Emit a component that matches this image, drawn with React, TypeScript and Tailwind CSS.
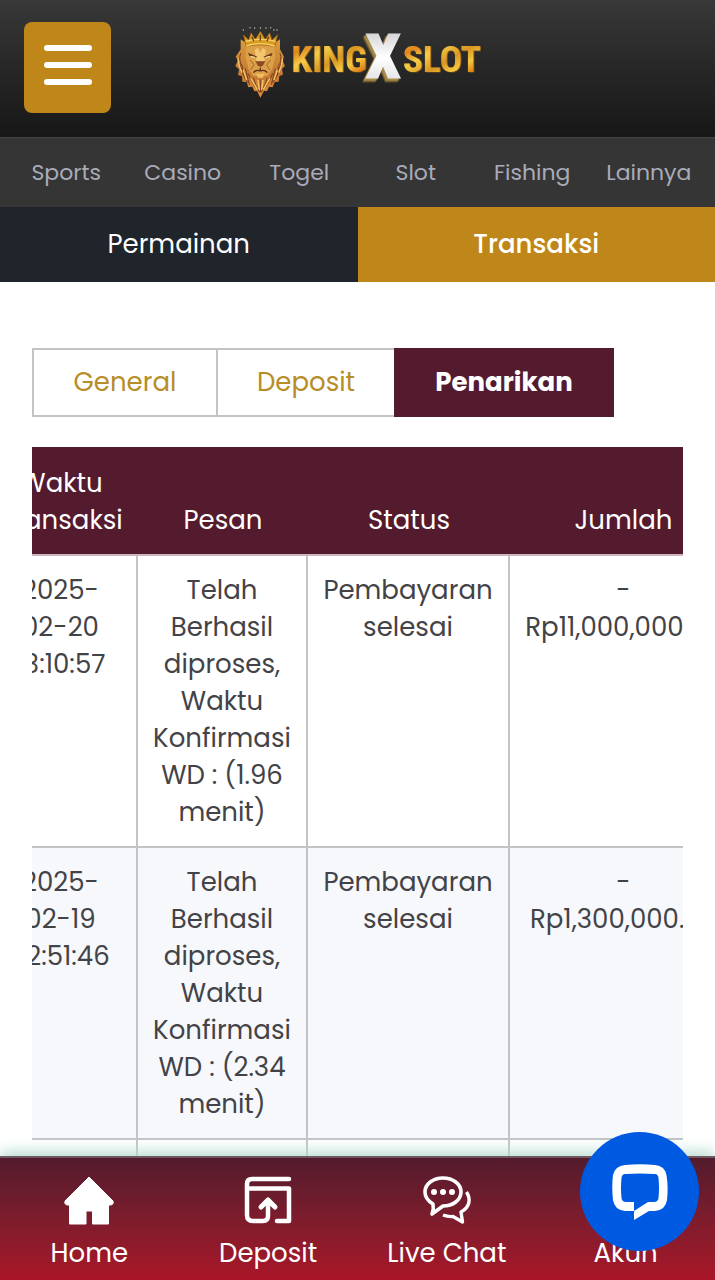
import { useLayoutEffect, useRef } from "react";

const categories = ["Sports", "Casino", "Togel", "Slot", "Fishing", "Lainnya"];

const withdrawals = [
  {
    time: "2025-\n02-20\n13:10:57",
    message: "Telah Berhasil diproses, Waktu Konfirmasi WD : (1.96 menit)",
    status: "Pembayaran selesai",
    amount: "-\nRp11,000,000.00",
  },
  {
    time: "2025-\n02-19\n22:51:46",
    message: "Telah Berhasil diproses, Waktu Konfirmasi WD : (2.34 menit)",
    status: "Pembayaran selesai",
    amount: "-\nRp1,300,000.00",
  },
  { time: "", message: "", status: "", amount: "" },
];

function Logo() {
  return (
    <svg viewBox="30 36 765 234" className="h-[78px] w-[255px]" role="img" aria-label="King X Slot">
      <defs>
        <linearGradient id="gold" x1="0" y1="0" x2="1" y2="1">
          <stop offset="0" stopColor="#f0bd38" />
          <stop offset="0.2" stopColor="#e0861c" />
          <stop offset="0.35" stopColor="#f4cd48" />
          <stop offset="0.55" stopColor="#d99722" />
          <stop offset="0.7" stopColor="#f4c840" />
          <stop offset="0.85" stopColor="#dd7a14" />
          <stop offset="1" stopColor="#f0c038" />
        </linearGradient>
        <linearGradient id="mane" x1="0" y1="0" x2="0" y2="1">
          <stop offset="0" stopColor="#d99a3a" />
          <stop offset="0.6" stopColor="#c47a33" />
          <stop offset="1" stopColor="#e0903c" />
        </linearGradient>
        <linearGradient id="silver" x1="0" y1="0" x2="0" y2="1">
          <stop offset="0" stopColor="#c4c4c6" />
          <stop offset="0.5" stopColor="#ffffff" />
          <stop offset="1" stopColor="#d6d6da" />
        </linearGradient>
      </defs>
      <g>
        <path d="M62 88 L78 98 L164 98 L180 88 L180 118 L192 140 L187 150 L195 168 L186 176 L189 194 L178 198 L176 215 L164 216 L158 232 L147 230 L141 244 L132 242 L121 263 L111 243 L103 244 L97 230 L85 232 L80 216 L67 215 L66 199 L54 195 L57 178 L46 168 L54 151 L47 140 L62 118 Z" fill="url(#mane)" />
        <g stroke="#7a3d1c" strokeWidth="3" fill="none">
          <path d="M62 130 Q54 150 68 170 Q62 190 84 218 M58 158 Q66 180 74 200 M180 130 Q188 150 174 170 Q180 190 158 218 M184 158 Q176 180 168 200" />
          <path d="M84 190 Q92 212 106 232 M158 190 Q150 212 136 232 M100 203 Q106 225 119 248 M142 203 Q136 225 123 248 M121 208 V246" />
          <path d="M76 175 L88 224 M166 175 L154 224" />
        </g>
        <g stroke="#f5c568" strokeWidth="4" fill="none">
          <path d="M54 145 Q56 168 66 188 M188 145 Q186 168 176 188 M92 205 L112 238 M150 205 L130 238 M114 210 L118 240 M129 210 L125 240" />
          <path d="M70 180 L80 210 M172 180 L162 210" />
        </g>
        <path d="M80 108 H162 L166 140 L156 178 L142 198 H100 L86 178 L76 140 Z" fill="#dca048" />
        <path d="M104 120 L114 113 L121 128 L128 113 L138 120 L133 154 H109 Z" fill="#f3c76f" />
        <path d="M84 128 L112 140 L106 144 L88 138 Z M158 128 L130 140 L136 144 L154 138 Z" fill="#6b3619" />
        <path d="M92 139 L106 143 M150 139 L136 143" stroke="#f8dd9a" strokeWidth="4" />
        <path d="M106 154 L136 154 L129 166 L121 171 L113 166 Z" fill="#8a4a26" />
        <path d="M121 173 V181 M100 188 Q108 178 121 183 Q134 178 142 188" stroke="#5e2f17" strokeWidth="4" fill="none" />
        <path d="M90 150 L102 164 L92 180 M152 150 L140 164 L150 180" stroke="#a8622f" strokeWidth="3" fill="none" />
        <path d="M108 191 H134 L128 203 H114 Z" fill="#f1bd63" />
        <path d="M70 74 L86 90 L93 68 L106 88 L121 64 L136 88 L149 68 L156 90 L173 74 L164 110 Q121 98 79 110 Z" fill="#d99a22" stroke="#8d5510" strokeWidth="2" />
        <path d="M79 108 Q121 94 164 108 M76 94 Q121 82 167 94" stroke="#f7d26b" strokeWidth="4" fill="none" />
        <path d="M96 80 L101 94 M121 74 V92 M146 80 L141 94" stroke="#694011" strokeWidth="4" />
        <g fill="#d8d2c2">
          <circle cx="70" cy="60" r="2" />
          <circle cx="90" cy="53" r="2" />
          <circle cx="104" cy="54" r="2" />
          <circle cx="121" cy="54" r="2" />
          <circle cx="138" cy="54" r="2" />
          <circle cx="152" cy="53" r="2" />
          <circle cx="162" cy="60" r="2" />
          <circle cx="171" cy="60" r="2" />
        </g>
      </g>
      <g fontFamily="'Roboto Condensed', 'Liberation Sans Narrow', sans-serif" fontWeight="700">
        <g fontSize="112" fill="url(#gold)" className="[filter:drop-shadow(3px_1px_0_#a86a18)]">
          <text x="214" y="187">KING</text>
          <text x="548" y="187">SLOT</text>
        </g>
        <text x="440" y="202" fontSize="176" fill="url(#silver)" stroke="url(#silver)" strokeWidth="9" className="[filter:drop-shadow(-6px_7px_0_#a58a4a)_drop-shadow(-3px_4px_0_#75602e)]">X</text>
      </g>
    </svg>
  );
}

function HomeIcon() {
  return (
    <svg viewBox="0 0 50 50" className="size-[50px]" aria-hidden="true">
      <path d="M25 2 L49 26 Q50 30 46 30 H44.500 V49 H28.500 V36 H22 V49 H5.500 V30 H4 Q0 30 1 26 Z" fill="#fff" stroke="#fff" strokeWidth="1" strokeLinejoin="round" />
    </svg>
  );
}

function DepositIcon() {
  return (
    <svg viewBox="0 0 50 50" className="size-[50px]" aria-hidden="true" fill="none" stroke="#fff" strokeWidth="4.500" strokeLinecap="round" strokeLinejoin="round">
      <path d="M46 4 H9 Q4 4 4 9 V40 Q4 46 10 46 H20 Q25 46 25 41 V26" />
      <path d="M4 13.500 H46 V46 H34" />
      <path d="M18 32 L25 25 L32 32" strokeWidth="5" />
    </svg>
  );
}

function ChatIcon() {
  return (
    <svg viewBox="0 0 50 50" className="size-[50px]" aria-hidden="true" fill="none" stroke="#fff" strokeWidth="3.600" strokeLinejoin="round">
      <path d="M21 3 C31 3 39 9 39 17 C39 25 31 31 21 31 L10 39 Q12 34 11 29 C6 26 3 22 3 17 C3 9 11 3 21 3 Z" />
      <path d="M44.500 17 C49 24 48 32 39 37 L40.500 47 L31 41.500 Q26 42 21 40" strokeWidth="3.400" />
      <g fill="#fff" stroke="none">
        <circle cx="12" cy="17" r="3" />
        <circle cx="21" cy="17" r="3" />
        <circle cx="30" cy="17" r="3" />
      </g>
    </svg>
  );
}

function AccountIcon() {
  return (
    <svg viewBox="0 0 50 50" className="size-[50px]" aria-hidden="true" fill="#fff">
      <circle cx="25" cy="15" r="11" />
      <path d="M5 47 Q5 29 25 29 Q45 29 45 47 Z" />
    </svg>
  );
}

const shortcuts = [
  { label: "Home", Icon: HomeIcon },
  { label: "Deposit", Icon: DepositIcon },
  { label: "Live Chat", Icon: ChatIcon },
  { label: "Akun", Icon: AccountIcon },
];

export default function App() {
  const tableScroll = useRef<HTMLDivElement>(null);

  useLayoutEffect(() => {
    if (tableScroll.current) tableScroll.current.scrollLeft = 47;
  }, []);

  return (
    <div className="relative flex h-screen flex-col overflow-hidden bg-white font-['Poppins','Inter',sans-serif] text-[#434347]">
      <header className="grid h-[137px] shrink-0 grid-cols-[1fr_auto_1fr] items-start bg-linear-to-b from-[#383838] to-[#171717] px-6 pt-[22px]">
        <button type="button" aria-label="Menu" className="flex h-[91px] w-[87px] flex-col items-center justify-center gap-[11px] rounded-lg bg-[#bf871a] pb-[5px]">
          <span className="h-[6px] w-12 rounded-full bg-white" />
          <span className="h-[6px] w-12 rounded-full bg-white" />
          <span className="h-[6px] w-12 rounded-full bg-white" />
        </button>
        <Logo />
      </header>

      <nav className="grid h-[70px] shrink-0 grid-cols-6 items-center border-t border-[#444] bg-[#353535] px-2 text-center text-[22px] text-[#a9abb9]">
        {categories.map((c) => (
          <a key={c} href="#">{c}</a>
        ))}
      </nav>

      <div className="grid h-[75px] shrink-0 grid-cols-2 text-[26px] text-white">
        <button type="button" className="bg-[#20242b]">Permainan</button>
        <button type="button" className="bg-[#bf871a] font-medium">Transaksi</button>
      </div>

      <main className="min-h-0 flex-1 overflow-hidden px-8 pt-[66px]">
        <div className="flex h-[69px] text-[26px] text-[#b78d27]">
          <button type="button" className="w-[184px] border-2 border-r-0 border-[#c3c3c5]">General</button>
          <button type="button" className="w-[178px] border-2 border-r-0 border-[#c3c3c5]">Deposit</button>
          <button type="button" className="w-[220px] bg-[#531b2d] font-bold text-white">Penarikan</button>
        </div>

        <div ref={tableScroll} className="mt-[30px] overflow-x-auto [scrollbar-width:none]">
          <table className="w-full min-w-[752px] table-fixed border-separate border-spacing-0 text-center text-[26px] leading-[37px]">
            <colgroup>
              <col className="w-[153px]" />
              <col className="w-[170px]" />
              <col className="w-[202px]" />
              <col />
            </colgroup>
            <thead className="bg-[#531b2d] text-white">
              <tr className="h-[109px] align-bottom">
                <th className="border-b-2 border-[#cdb4bd] pb-[15px] font-normal">Waktu<br />Transaksi</th>
                <th className="border-b-2 border-[#cdb4bd] pb-[15px] font-normal">Pesan</th>
                <th className="border-b-2 border-[#cdb4bd] pb-[15px] font-normal">Status</th>
                <th className="border-b-2 border-[#cdb4bd] pb-[15px] font-normal">Jumlah</th>
              </tr>
            </thead>
            <tbody>
              {withdrawals.map((row, i) => (
                <tr key={i} className="h-[292px] align-top even:bg-[#f6f8fc]">
                  <td className="border-r-2 border-b-2 border-[#c3c3c5] px-3 pt-4 pb-[15px] whitespace-pre-line">{row.time}</td>
                  <td className="border-r-2 border-b-2 border-[#c3c3c5] px-3 pt-4 pb-[15px]">{row.message}</td>
                  <td className="border-r-2 border-b-2 border-[#c3c3c5] px-3 pt-4 pb-[15px]">{row.status}</td>
                  <td className="border-b-2 border-[#c3c3c5] px-3 pt-4 pb-[15px] whitespace-pre-line">{row.amount}</td>
                </tr>
              ))}
            </tbody>
          </table>
        </div>
      </main>

      <footer className="relative grid h-[124px] shrink-0 grid-cols-4 border-t-2 border-[#6f5a62] bg-linear-to-b from-[#531b2d] to-[#a91527] pt-[17px] text-[26px] text-white shadow-[0_-4px_14px_0_#b4dccf]">
        {shortcuts.map(({ label, Icon }) => (
          <a key={label} href="#" className="flex flex-col items-center gap-2 leading-[40px]">
            <Icon />
            {label}
          </a>
        ))}
      </footer>

      <button type="button" aria-label="Chat" className="absolute right-4 bottom-[29px] flex size-[119px] items-center justify-center rounded-full bg-[#0059e1]">
        <svg viewBox="0 0 56 56" className="size-14" aria-hidden="true">
          <path fillRule="evenodd" fill="#fff" d="M13 1 Q28 -0.500 43 1 Q53 2 54.500 11 Q56.500 23 55 36 Q53.500 46 43 47 H37 L22 56 V47 H13 Q2.500 46 1 36 Q-0.500 23 1 11 Q3 2 13 1 Z M13 10 Q28 9 43 10 Q46 10 46.500 14 Q47.500 24 46.500 34 Q46 38 42 38 H36 L22 47 V38 H14 Q10 38 9.500 34 Q8.500 24 9.500 14 Q10 10 13 10 Z" />
        </svg>
      </button>
    </div>
  );
}
